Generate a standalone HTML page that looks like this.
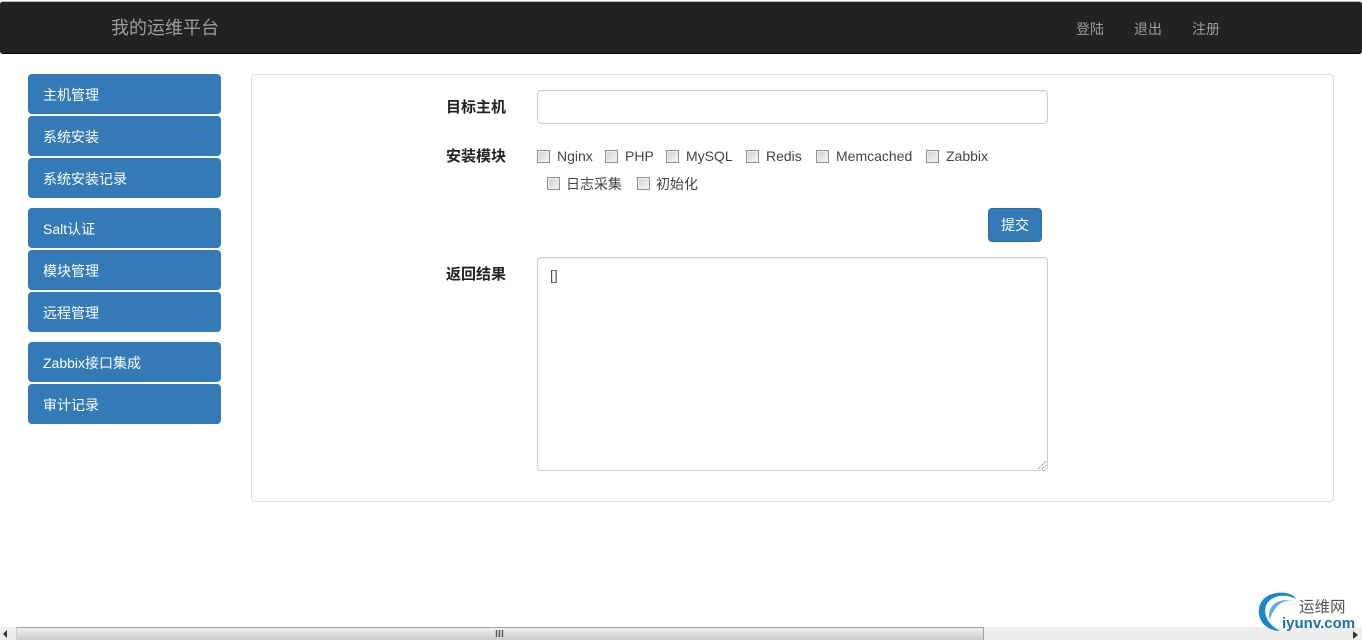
<!DOCTYPE html>
<html lang="zh"><head><meta charset="utf-8"><title>我的运维平台</title>
<style>
html,body{margin:0;padding:0;width:1362px;height:640px;overflow:hidden;background:#fff}
body{position:relative;font-family:"Liberation Sans","WenQuanYi Zen Hei","Noto Sans CJK SC",sans-serif;font-size:14px;color:#333}
.a{position:absolute;white-space:nowrap}
#nav{left:0;top:1px;width:1362px;height:53px;background:#222;border-top:1px solid #bbb;border-bottom:1px solid #080808;border-radius:3px;box-sizing:border-box}
.n{color:#9d9d9d;font-size:14px;line-height:20px;top:19px}
.b{left:28px;width:193px;height:40px;background:#337ab7;border-radius:4px;color:#fff;font-size:14px;line-height:42px;text-indent:15px;overflow:hidden}
#panel{left:251px;top:74px;width:1083px;height:428px;box-sizing:border-box;border:1px solid #ddd;border-radius:4px}
.l{font-weight:bold;color:#222;font-size:15px;line-height:20px;left:446px;font-family:"Noto Sans CJK SC",sans-serif}
.f{left:537px;width:511px;box-sizing:border-box;border:1px solid #ccc;border-radius:4px;box-shadow:inset 0 1px 1px rgba(0,0,0,.04)}
.c{width:13px;height:13px;box-sizing:border-box;border:1px solid #8f8f8f;background:linear-gradient(135deg,#cfcfcf,#f6f6f6);box-shadow:inset 0 0 0 1px #eee}
.t{font-size:14px;line-height:20px;color:#444}
</style></head><body>
<div class="a" id="nav"></div>
<div class="a" style="left:111px;top:17px;font-size:18px;line-height:22px;color:#9d9d9d">我的运维平台</div>
<div class="a n" style="left:1076px">登陆</div>
<div class="a n" style="left:1134px">退出</div>
<div class="a n" style="left:1192px">注册</div>

<div class="a b" style="top:74px">主机管理</div>
<div class="a b" style="top:116px">系统安装</div>
<div class="a b" style="top:158px">系统安装记录</div>
<div class="a b" style="top:208px">Salt认证</div>
<div class="a b" style="top:250px">模块管理</div>
<div class="a b" style="top:292px">远程管理</div>
<div class="a b" style="top:342px">Zabbix接口集成</div>
<div class="a b" style="top:384px">审计记录</div>

<div class="a" id="panel"></div>
<div class="a l" style="top:97px">目标主机</div>
<div class="a f" style="top:90px;height:34px"></div>
<div class="a l" style="top:146px">安装模块</div>

<div class="a c" style="left:537px;top:150px"></div><div class="a t" style="left:557px;top:146px">Nginx</div>
<div class="a c" style="left:605px;top:150px"></div><div class="a t" style="left:625px;top:146px">PHP</div>
<div class="a c" style="left:666px;top:150px"></div><div class="a t" style="left:686px;top:146px">MySQL</div>
<div class="a c" style="left:746px;top:150px"></div><div class="a t" style="left:766px;top:146px">Redis</div>
<div class="a c" style="left:816px;top:150px"></div><div class="a t" style="left:836px;top:146px">Memcached</div>
<div class="a c" style="left:926px;top:150px"></div><div class="a t" style="left:946px;top:146px">Zabbix</div>
<div class="a c" style="left:547px;top:177px"></div><div class="a t" style="left:566px;top:174px">日志采集</div>
<div class="a c" style="left:637px;top:177px"></div><div class="a t" style="left:656px;top:174px">初始化</div>

<div class="a" style="left:988px;top:208px;width:54px;height:34px;box-sizing:border-box;background:#337ab7;border:1px solid #2e6da4;border-radius:4px;color:#fff;text-align:center;line-height:33px">提交</div>

<div class="a l" style="top:264px">返回结果</div>
<div class="a f" style="top:257px;height:214px"></div>
<div class="a" style="left:550px;top:265px;font-size:14px;line-height:20px;color:#555">[]</div>
<svg class="a" style="left:1036px;top:459px" width="12" height="12"><path d="M2 10L10 2M6 10L10 6" stroke="#666" stroke-width="1" stroke-dasharray="1 1" fill="none"/></svg>

<!-- scrollbar -->
<div class="a" style="left:0;top:627px;width:1362px;height:13px;background:#eee"></div>
<div class="a" style="left:16px;top:627px;width:968px;height:13px;box-sizing:border-box;border:1px solid #a0a0a0;border-width:1px 1px 0 1px;border-left-color:#ccc;background:linear-gradient(#efefef,#cdcdcd)"></div>
<svg class="a" style="left:0;top:627px" width="16" height="13"><path d="M3 7L7 3V11Z" fill="#333"/></svg>
<svg class="a" style="left:495px;top:630px" width="10" height="8"><path d="M1.500 0V7M4.500 0V7M7.500 0V7" stroke="#555" stroke-width="1.400"/></svg>
<svg class="a" style="left:1352px;top:630px" width="8" height="10"><path d="M1 1L6 5L1 9Z" fill="#333"/></svg>

<!-- watermark -->
<svg class="a" style="left:1256px;top:590px" width="46" height="46"><path d="M24 41C11 41 1 31 3 18C5 7 17 1 30 3C36 4 39 7 40 9C33 5 22 4 14 10C6 17 7 32 24 41Z" fill="#1b87c9"/><path d="M14 30C10 19 19 7 36 11C26 10 18 16 14 30Z" fill="#5cb2e2"/></svg>
<div class="a" style="left:1299px;top:598px;font-size:15.500px;line-height:17px;color:#555;font-family:'Noto Sans CJK SC',sans-serif">运维网</div>
<div class="a" style="left:1282px;top:615px;font-size:15px;line-height:18px;color:#1a6fb0;font-weight:bold">iyunv.com</div>
</body></html>
